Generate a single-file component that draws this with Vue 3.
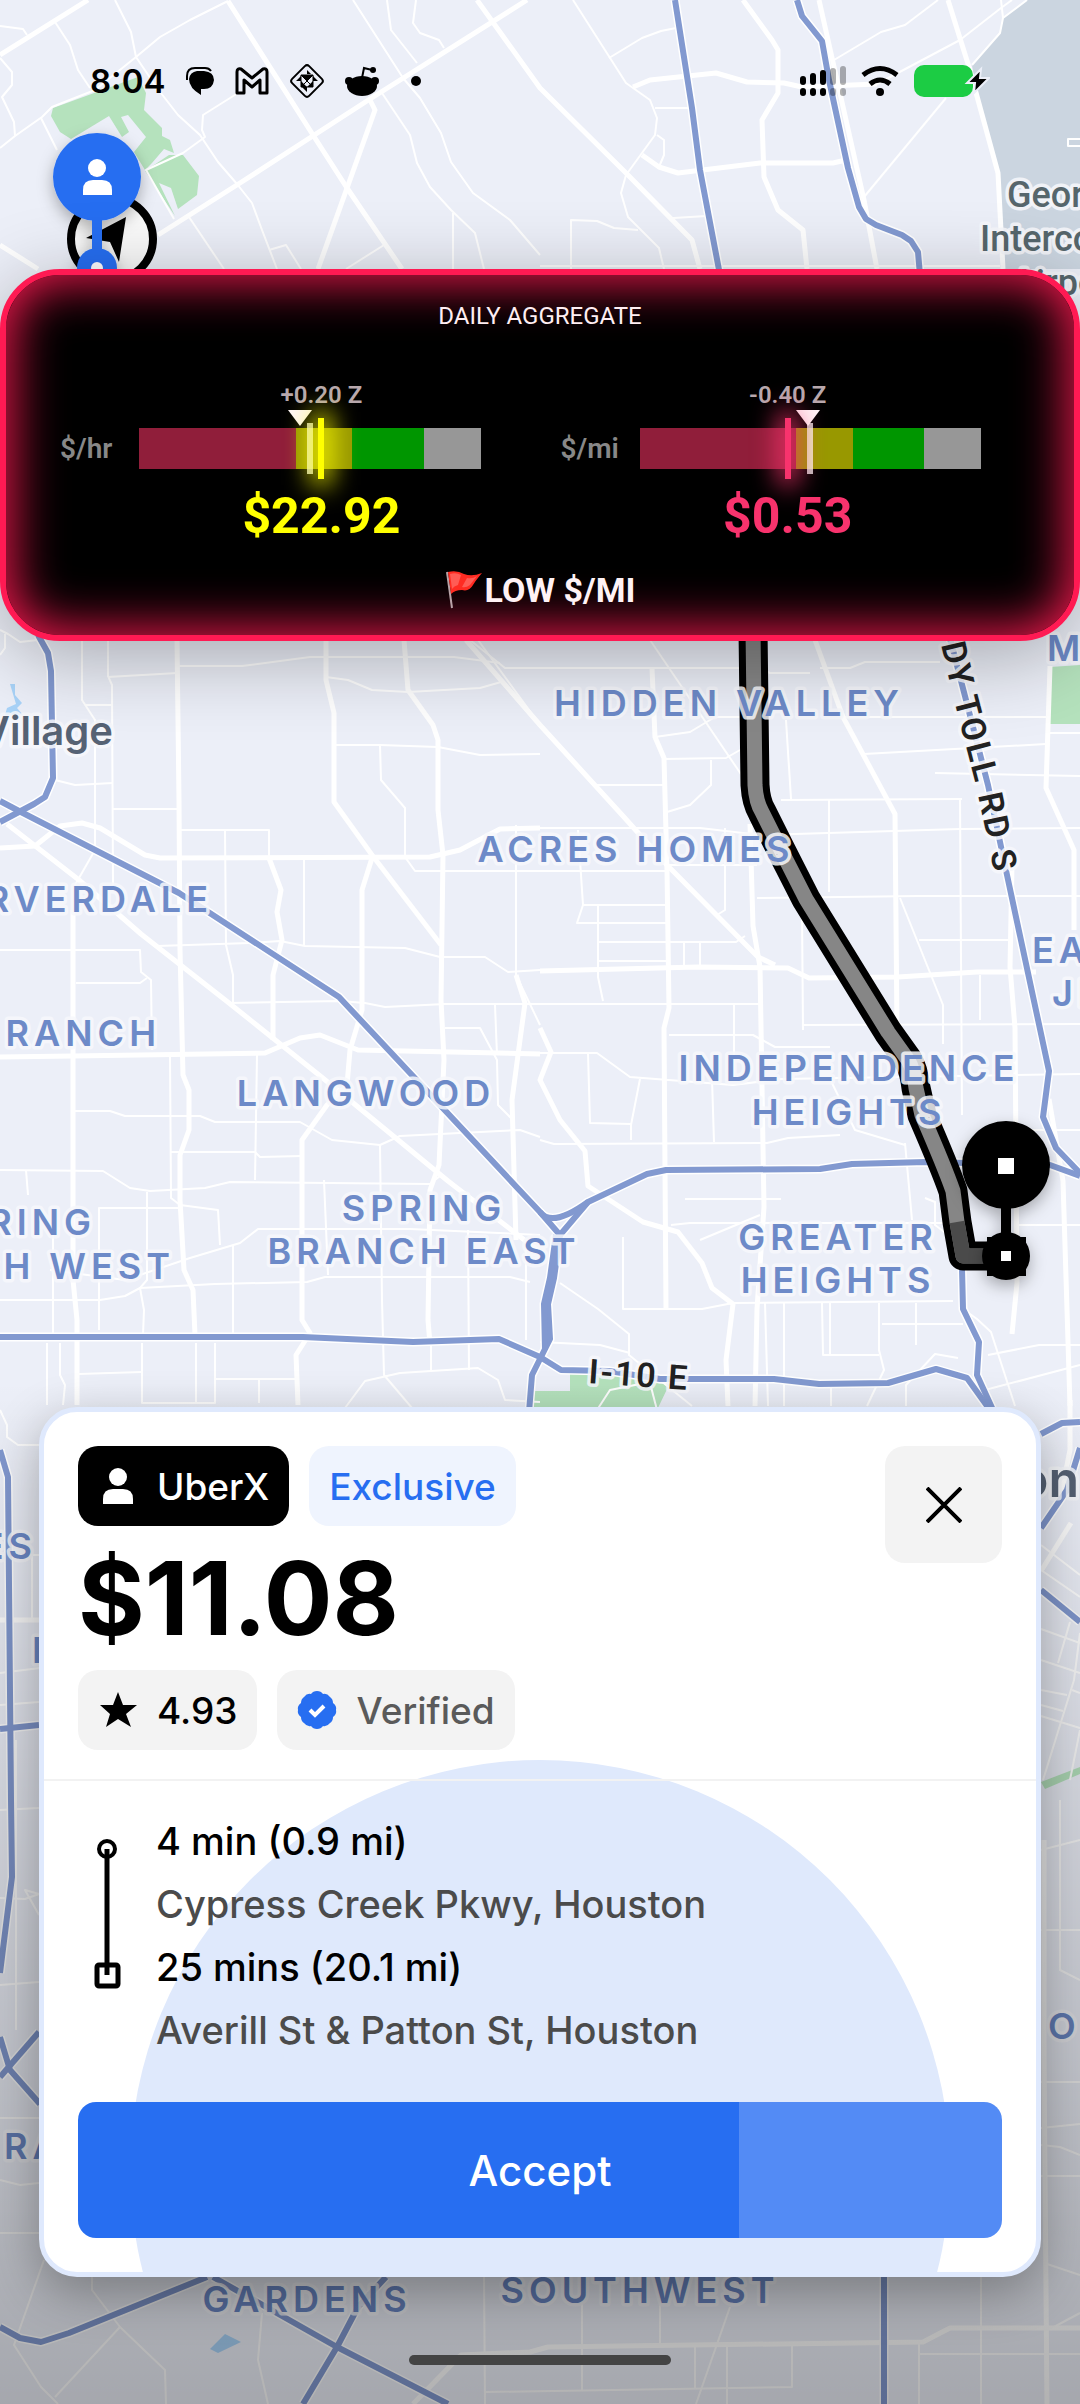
<template>
  <main class="screen">
    <svg class="map" viewBox="0 0 1080 2404" preserveAspectRatio="xMidYMin slice" aria-label="Map of Houston">
      <defs>
        <linearGradient id="dim" x1="0" y1="0" x2="0" y2="1">
          <stop offset="0" stop-color="#000" stop-opacity="0" />
          <stop offset="0.4" stop-color="#000" stop-opacity="0.12" />
          <stop offset="1" stop-color="#000" stop-opacity="0.3" />
        </linearGradient>
        <filter id="pinShadow" x="-50%" y="-50%" width="200%" height="200%">
          <feDropShadow dx="0" dy="6" stdDeviation="8" flood-color="#000" flood-opacity="0.3" />
        </filter>
        <path id="tollRoad" d="M928 590 L954 700 L976 785 L998 890" />
      </defs>
      <rect width="1080" height="2404" fill="#eceff8" />
      <path v-for="d in water" :key="d" :d="d" fill="#cbd5e0" />
      <path v-for="d in parks" :key="d" :d="d" fill="#b5e2bd" />
      <path v-for="d in ponds" :key="d" :d="d" fill="#a9d3f8" />
      <path v-for="d in minorRoads" :key="d" :d="d" class="road" stroke-width="2" />
      <path v-for="d in majorRoads" :key="d" :d="d" class="road" stroke-width="5" />
      <path v-for="d in highways" :key="d" :d="d" class="road" stroke-width="9" />
      <path v-for="d in highways" :key="d + 'b'" :d="d" class="highway" />

      <path :d="route" class="route" stroke="#000" stroke-width="29" />
      <path :d="route" class="route" stroke="#868686" stroke-width="15" />
      <path d="M957 1222 L963 1256 H998" class="route" stroke="#4a4a4a" stroke-width="15" />

      <g class="area">
        <text v-for="l in areas" :key="l.text + l.y" :x="l.x" :y="l.y" :text-anchor="l.anchor || 'middle'">{{ l.text }}</text>
      </g>
      <g class="airport">
        <text x="1007" y="207">George Bush</text>
        <text x="980" y="251">Intercontinental</text>
        <text x="1012" y="295">Airport</text>
      </g>
      <text class="town" x="113" y="745" font-size="40" text-anchor="end">Village</text>
      <text class="town" x="1079" y="1497" font-size="50" text-anchor="end">Houston</text>
      <text class="street"><textPath href="#tollRoad" startOffset="56">DY TOLL RD S</textPath></text>
      <text class="street wide" x="588" y="1383" transform="rotate(4 588 1383)">I-10 E</text>

      <circle cx="112" cy="239" r="41" fill="#fafafa" stroke="#000" stroke-width="8" />
      <path d="M126 217 L119 262 L110 242 L86 238 Z" fill="#000" />
      <g filter="url(#pinShadow)">
        <path d="M97 176 V268" stroke="#276ef1" stroke-width="10" />
        <circle cx="97" cy="177" r="44" fill="#276ef1" />
        <circle cx="97" cy="268" r="20" fill="#276ef1" />
      </g>
      <circle cx="97" cy="268" r="6" fill="#fff" />
      <circle cx="97" cy="168" r="9" fill="#fff" />
      <path d="M83 195 V190 Q83 180 93 180 H102 Q112 180 112 190 V195 Z" fill="#fff" />
      <g filter="url(#pinShadow)">
        <path d="M1006 1165 V1256" stroke="#000" stroke-width="10" />
        <circle cx="1006" cy="1165" r="44" />
        <circle cx="1006" cy="1256" r="24" />
        <rect x="987" y="1237" width="39" height="39" />
      </g>
      <rect x="998" y="1158" width="16" height="16" fill="#fff" />
      <rect x="1001" y="1251" width="10" height="10" fill="#fff" />
      <rect y="1380" width="1080" height="1024" fill="url(#dim)" />
    </svg>

    <header class="status">
      <div class="status-side">
        <time>8:04</time>
        <svg width="30" height="30" viewBox="0 0 30 30">
          <path d="M2 14 V10 Q2 2 10 2 H20 Q24 2 26 5" fill="none" stroke="#000" stroke-width="2" />
          <path d="M12 5 H19 Q29 6 29 14 Q28 23 19 23 H16 V29 Q4 22 4 13 Q5 6 12 5 Z" />
        </svg>
        <svg width="34" height="30" viewBox="0 0 34 30">
          <path d="M2 6 Q2 2 6 3 L17 12 L28 3 Q32 2 32 6 V27 H25 V14 L17 21 L9 14 V27 H2 Z" fill="none" stroke="#000" stroke-width="3" stroke-linejoin="round" />
        </svg>
        <svg width="36" height="36" viewBox="0 0 36 36">
          <rect x="6" y="6" width="24" height="24" rx="3" transform="rotate(45 18 18)" fill="none" stroke="#000" stroke-width="2" />
          <path d="M18 7 L22 11 H18 Z M12 12 H18 V18 Z M18 12 H24 L18 18 Z M24 13 L29 18 H24 Z M12 18 H7 L12 13 Z M12 18 L18 24 H12 Z M24 18 V24 H18 Z M18 24 V29 L13 24 Z" />
          <path d="M12 12 H24 V24 H12 Z M12 12 L24 24 M24 12 L12 24" fill="none" stroke="#000" stroke-width="1" />
        </svg>
        <svg width="34" height="36" viewBox="0 0 34 36">
          <path d="M17 15 L19 5 L27 7" fill="none" stroke="#000" stroke-width="2" />
          <circle cx="28" cy="7" r="3" />
          <circle cx="4" cy="18" r="4" />
          <circle cx="30" cy="18" r="4" />
          <ellipse cx="17" cy="23" rx="15" ry="10" />
        </svg>
        <span class="dot"></span>
      </div>
      <div class="status-side right">
        <svg width="46" height="32" viewBox="0 0 46 32">
          <g v-for="(h, i) in [9, 12, 15, 17, 19]" :key="i" :opacity="i > 2 ? 0.3 : 1">
            <rect :x="i * 10" :y="20 - h" width="6" :height="h" rx="3" />
            <rect :x="i * 10" y="23" width="6" height="8" rx="3" />
          </g>
        </svg>
        <svg width="38" height="32" viewBox="0 0 38 32">
          <path d="M2 10 Q19 -3 36 10 M9 19 Q19 11 29 19" fill="none" stroke="#000" stroke-width="5" />
          <circle cx="19" cy="27" r="4" />
        </svg>
        <svg width="76" height="34" viewBox="0 0 76 34">
          <rect y="1" width="59" height="32" rx="10" fill="#1ccc44" />
          <path d="M67 5 L53 19 H61 L60 29 L75 14 H66 Z" stroke="#eceff8" stroke-width="2" />
        </svg>
      </div>
    </header>

    <section class="banner">
      <h1>DAILY AGGREGATE</h1>
      <div class="gauges">
        <div v-for="g in gauges" :key="g.unit" class="gauge">
          <div class="reading z" :style="{ width: g.now * 2 + '%' }">{{ g.z }}</div>
          <div class="unit">{{ g.unit }}</div>
          <div class="track">
            <span class="low"></span>
            <span class="mid"></span>
            <span class="good"></span>
            <span class="top"></span>
            <i class="arrow" :style="{ left: g.target + '%' }"></i>
            <i class="mean" :style="{ left: g.mean + '%' }"></i>
            <i class="now" :style="{ left: g.now + '%', color: g.color }"></i>
          </div>
          <div class="reading value" :style="{ width: g.now * 2 + '%', color: g.color }">{{ g.value }}</div>
        </div>
      </div>
      <p class="flag">
        <svg width="38" height="40" viewBox="0 0 38 40">
          <path d="M2 2 L7 38" stroke="#b9a3a8" stroke-width="2" />
          <path d="M3 2 Q12 0 19 4 Q27 7 37 3 Q31 10 28 15 Q24 22 17 20 Q10 20 6 24 Z" fill="#ff2b22" />
          <path d="M5 4 Q11 2 16 5 L13 15 Q9 16 7 19 Z M22 8 Q28 9 32 6 L25 15 Q21 18 17 17 Z" fill="#ff5c55" />
        </svg>
        <span>LOW $/MI</span>
      </p>
    </section>

    <article class="card">
      <div class="head">
        <div class="summary">
          <div class="chips">
            <span class="chip dark">
              <svg width="40" height="40" viewBox="0 0 40 40">
                <circle cx="20" cy="11" r="9" />
                <path d="M5 38 V33 Q5 23 15 23 H25 Q35 23 35 33 V38 Z" />
              </svg>
              UberX
            </span>
            <span class="chip blue">Exclusive</span>
          </div>
          <p class="price">$11.08</p>
          <div class="chips">
            <span class="chip">
              <svg width="40" height="40" viewBox="0 0 40 40">
                <path d="M20 2 L25 15 L39 15 L28 24 L33 37 L20 29 L8 37 L12 24 L2 15 L15 15 Z" />
              </svg>
              4.93
            </span>
            <span class="chip muted">
              <svg width="40" height="40" viewBox="0 0 40 40">
                <path d="M20 1 Q24 1 26 4 Q30 3 33 7 Q36 9 36 13 Q40 16 39 20 Q40 24 36 27 Q36 31 33 33 Q30 37 26 36 Q24 39 20 39 Q16 39 14 36 Q10 37 7 33 Q4 31 4 27 Q0 24 1 20 Q0 16 4 13 Q4 9 7 7 Q10 3 14 4 Q16 1 20 1 Z" fill="#276ef1" />
                <path d="M13 20 L18 25 L27 16" fill="none" stroke="#fff" stroke-width="4" />
              </svg>
              Verified
            </span>
          </div>
        </div>
        <button class="close" type="button" aria-label="Dismiss">
          <svg width="36" height="36" viewBox="0 0 36 36">
            <path d="M1 1 L35 35 M35 1 L1 35" stroke="#000" stroke-width="4" />
          </svg>
        </button>
      </div>
      <div class="trip">
        <svg class="stops" width="26" height="144" viewBox="0 0 26 144">
          <circle cx="13" cy="10" r="8" fill="none" stroke="#000" stroke-width="4" />
          <path d="M13 10 V136" stroke="#000" stroke-width="5" />
          <rect x="3" y="126" width="21" height="21" rx="2" fill="none" stroke="#000" stroke-width="5" />
        </svg>
        <div class="legs">
          <template v-for="leg in legs" :key="leg.place">
            <p>{{ leg.time }}</p>
            <p class="place">{{ leg.place }}</p>
          </template>
        </div>
      </div>
      <button class="accept" type="button" @click="accepted = true">Accept</button>
    </article>

    <div class="home"></div>
  </main>
</template>

<script setup>
import { ref } from 'vue'

const accepted = ref(false)

const gauges = [
  { unit: '$/hr', z: '+0.20 Z', value: '$22.92', now: 53.4, mean: 50, target: 47, color: '#ffff00' },
  { unit: '$/mi', z: '-0.40 Z', value: '$0.53', now: 43.4, mean: 50, target: 49.3, color: '#f8336d' }
]

const legs = [
  { time: '4 min (0.9 mi)', place: 'Cypress Creek Pkwy, Houston' },
  { time: '25 mins (20.1 mi)', place: 'Averill St & Patton St, Houston' }
]

const areas = [
  { text: 'HIDDEN VALLEY', x: 729, y: 716 },
  { text: 'ACRES HOMES', x: 636, y: 862 },
  { text: 'RVERDALE', x: 213, y: 912, anchor: 'end' },
  { text: 'RANCH', x: 161, y: 1046, anchor: 'end' },
  { text: 'LANGWOOD', x: 366, y: 1106 },
  { text: 'SPRING', x: 424, y: 1221 },
  { text: 'BRANCH EAST', x: 424, y: 1264 },
  { text: 'SPRING', x: 96, y: 1235, anchor: 'end' },
  { text: 'BRANCH WEST', x: 175, y: 1279, anchor: 'end' },
  { text: 'INDEPENDENCE', x: 849, y: 1081 },
  { text: 'HEIGHTS', x: 849, y: 1125 },
  { text: 'GREATER', x: 838, y: 1250 },
  { text: 'HEIGHTS', x: 838, y: 1293 },
  { text: 'EAST', x: 1032, y: 963, anchor: 'start' },
  { text: 'JENSEN', x: 1052, y: 1006, anchor: 'start' },
  { text: 'M', x: 1047, y: 661, anchor: 'start' },
  { text: 'ES', x: 37, y: 1559, anchor: 'end' },
  { text: 'E', x: 32, y: 1663, anchor: 'start' },
  { text: 'O', x: 1048, y: 2039, anchor: 'start' },
  { text: 'RA', x: 4, y: 2159, anchor: 'start' },
  { text: 'GARDENS', x: 307, y: 2312 },
  { text: 'SOUTHWEST', x: 640, y: 2303 }
]

const route = 'M753 630 L755 785 Q756 802 762 812 L778 844 L806 899 L888 1032 L908 1060 Q914 1070 916 1088 L922 1115 Q945 1168 953 1191 L957 1222 L963 1256 H998'

const water = ['M1027 0 L1003 18 L1000 33 L972 65 L979 107 L998 173 L1001 269 H1080 V0 Z']

const parks = [
  'M53 108 L138 77 L146 93 L144 110 L162 128 V136 L170 140 L174 153 L164 149 L152 163 L145 170 L134 152 L146 137 L128 115 L121 117 L129 132 L122 137 L109 116 L71 139 L60 132 L51 116 Z',
  'M145 171 L169 155 H183 L199 176 L197 195 L178 209 L171 188 L159 183 L175 216 Z',
  'M1050 667 L1080 665 V724 H1050 Z',
  'M530 1410 L534 1391 H570 V1374 L612 1375 L669 1385 L657 1410 Z',
  'M1041 1782 L1080 1767 V1774 L1045 1789 Z'
]

const ponds = [
  'M10 684 H15 V695 L22 703 L17 708 L23 715 H5 L7 708 L16 704 Z',
  'M225 2334 L241 2342 L218 2353 L210 2349 Z'
]

const highways = [
  'M675 0 L692 108 L700 170 L720 275',
  'M797 0 L802 16 L822 41 L829 80 L848 168 L859 207 L866 219 L876 225 L902 235 L911 241 L918 252 L920 275',
  'M940 600 L966 700 L988 785 L1007 875 L1049 1071 L1043 1117 L1056 1148 L1080 1173',
  'M0 801 L19 811 L179 893 L339 997 L540 1212 L560 1235',
  'M560 1235 L588 1202 L647 1174 L666 1170 L820 1169 L852 1164 L926 1162 L1050 1165 L1080 1176',
  'M560 1235 L554 1278 L548 1304 L550 1339 L532 1375 L529 1412',
  'M556 1235 L550 1278 L544 1304 L545 1350',
  'M540 1212 Q552 1228 588 1202',
  'M0 1337 L303 1337 L413 1342 L499 1339 L540 1357 L561 1370 L609 1371 L660 1379 L774 1379 L819 1384 L888 1383 L936 1369 L967 1378 L990 1410',
  'M962 1268 L963 1309 L979 1342 L977 1375 L993 1410',
  'M38 635 L48 653 L51 671 L53 778 L45 797 L34 804 L0 822',
  'M0 1450 L8 1477 L11 1800 L12 1877 L0 1973',
  'M0 1729 L39 1725',
  'M0 2077 L39 2032',
  'M0 2037 L10 2070 L40 2104',
  'M0 2327 L20 2338 L41 2342 L69 2333 L207 2277',
  'M213 2277 L337 2347 L448 2404',
  'M303 2404 L337 2347 L358 2307 L386 2277',
  'M884 2270 V2404',
  'M1041 1434 L1062 1423 L1080 1422',
  'M1080 1448 L1067 1490 L1041 1528',
  'M1041 1590 L1080 1622'
]

const majorRoads = [
  'M0 55 L88 0',
  'M158 235 L240 183 L370 99 L527 0',
  'M228 1 L313 135 L347 188 L402 269',
  'M477 0 L540 88 L625 172 L692 240 L700 269',
  'M0 245 L38 269',
  'M370 100 L375 110 L318 269',
  'M819 0 L864 200 L877 269',
  'M948 0 L969 67 L998 173 L1003 269',
  'M743 0 L772 40 L778 50 V93 L762 120 L764 177 L778 210 L803 230 L807 269',
  'M633 87 L650 80 L716 73 L747 82 L784 83 L802 87 L877 84',
  'M642 155 L659 167 L678 173 L760 163 L833 163 L846 160',
  'M177 640 L179 800 L180 950 L183 1075 L189 1090 V1130 L180 1155 V1200 L184 1270 L193 1290 L195 1335',
  'M326 640 V680 L334 713 V802 L372 855 L441 945',
  'M404 640 L408 690 L433 725 L438 740 V810 L443 855 L441 1000 L444 1060 L439 1165 L430 1190 L428 1320 L430 1344',
  'M372 858 L362 890 V1010 L350 1050 L347 1085 L327 1105 L302 1140 V1320 L310 1333 L296 1355 L298 1405',
  'M7 824 L79 880 L141 934 L229 1003 L324 1079 L448 1181 L540 1252',
  'M73 910 V1280 L77 1320 V1405',
  'M269 858 L281 890 L277 912 L282 940 L273 975 V1040',
  'M0 1057 L73 1056 L265 1053 L300 1038 L320 1035 L358 1050 L540 1054',
  'M0 848 L35 846 L60 826 L82 823 L100 828 L145 855 L160 858 L430 857 L460 850 L500 829 L540 828',
  'M516 975 L525 1003 L520 1040 L512 1100 L516 1240',
  'M466 640 L540 725 L623 816 L667 865 L758 957 L775 965',
  'M815 640 L843 717 L895 814 L897 1030',
  'M652 668 L655 737 L664 758 L667 870 L669 1008 L664 1028 L666 1309',
  'M750 824 L753 926 L760 967 L764 1207 L757 1309 L755 1406',
  'M540 971 L698 967 L788 968 L809 978 L898 977 L977 972 L1036 972',
  'M540 1028 L551 1052 L540 1080 L560 1120 L585 1151 L588 1186 L643 1222 L678 1232 L702 1263 L712 1288 L733 1304 L726 1360 L728 1406',
  'M1050 666 L1046 788 L1074 850 V930',
  'M1049 1099 L1063 1181 L1070 1406',
  'M1012 865 L1010 967 L1015 1028 L1017 1283 L1012 1334',
  'M413 2404 L461 2355 L530 2352 L548 2347 L923 2342 L950 2328 H1080',
  'M1044 1840 V2060 L1047 2404',
  'M0 1620 H40', 'M1070 1400 V1450 L1060 1500', 'M1071 1523 L1041 1571'
]

const minorRoads = [
  'M0 26 L23 29 L27 35',
  'M55 22 L70 45 L78 70 L90 88',
  'M115 0 L131 32 L136 57 L157 88 L178 115 L200 135 L218 162 L237 184 L252 203 L262 230 L277 269',
  'M0 148 L15 136 L42 117 L52 107 L95 90 L136 57 L160 37 L190 20 L228 1',
  'M353 0 L403 78 L420 98 L441 133 L451 162 L473 193 L510 220 L540 255',
  'M382 93 L410 135 L417 163 L430 187 L451 210 L475 233 L484 269',
  'M416 0 L413 23 L420 33 L439 40 L444 48',
  'M387 0 L391 30 L417 63',
  'M238 93 L203 115 L202 130 L205 137 L183 153 L146 170 L174 219',
  'M0 58 L12 72 V85 L2 97 L14 122 L15 136',
  'M41 118 L57 150', 'M189 217 L224 269', 'M384 245 L346 269', 'M269 250 L286 245 L301 269', 'M453 213 V269',
  'M573 0 L626 83 L650 100 L657 118 L655 135 L626 175 L621 193 L628 217 L659 248 L664 269',
  'M609 58 L642 38 L661 31 L676 28',
  'M877 84 L960 40 L1001 8 L1012 0',
  'M1027 0 L1003 18 L1000 33 L972 65', 'M1001 0 L1003 18',
  'M834 60 L881 32 L905 25 L938 0',
  'M657 135 L664 140 V155 L659 167',
  'M946 98 L864 197', 'M655 108 H688', 'M673 218 L707 216',
  'M571 269 V220 L597 221 L614 228 L638 230',
  'M540 266 H1000', 'M1080 139 H1068 V146 H1080',
  'M0 630 L8 634 L20 642 L38 640', 'M0 655 L5 648 V634',
  'M82 640 V700 L95 720 V850 L75 885',
  'M108 640 V676 L112 685 L113 885',
  'M108 677 L177 673', 'M179 666 L242 666 L310 657 L454 657 L500 663',
  'M326 677 L348 680 L372 690 L408 692 L480 688 L501 682',
  'M470 640 L505 668 H740', 'M478 640 L540 725',
  'M334 745 H380 L438 747 L480 755 L540 754',
  'M380 745 L381 780 L405 808 V857',
  'M113 809 H178', 'M55 780 L75 785 L113 783', 'M85 705 H112',
  'M180 830 H269 V862', 'M225 831 L226 945 L233 975 V1003', 'M304 858 V946',
  'M157 946 L250 943 L280 941 L305 946 L405 948 L440 957 H485 L508 972 L540 970',
  'M405 857 L415 871 H540',
  'M0 950 H140 L141 972 L151 980 L152 1050', 'M76 983 H140 L147 978',
  'M229 1003 L340 1001 L365 1003 L385 1007 L445 1004 H760',
  'M170 1055 L171 1198 L180 1205',
  'M73 1111 H110 L125 1116 H200 L215 1122 H300 L332 1140 L380 1145 L400 1136 L520 1130 L540 1137',
  'M257 1055 L255 1180', 'M171 1152 H255 L260 1157 L302 1156',
  'M0 1170 L103 1171 L130 1188 L150 1191 L205 1188 L230 1182 L430 1184 L440 1176',
  'M26 1170 L28 1195', 'M147 1192 V1280 L140 1288 L144 1310 L143 1335',
  'M180 1205 L218 1210 L220 1245', 'M99 1330 V1208 H178',
  'M50 1270 L125 1280 L190 1258 L240 1243 L258 1229 H410 L540 1235',
  'M0 1300 H100 L125 1296 L140 1288 L215 1284 L307 1282 L325 1277 H510 L530 1282',
  'M53 1235 V1335', 'M233 1245 V1335', 'M324 1180 L328 1275', 'M468 1230 L469 1370', 'M526 1250 V1340',
  'M380 1145 L382 1300 L384 1375 L412 1408',
  'M445 1028 H480 L497 1060 L498 1105 L513 1120', 'M495 1005 L497 1055', 'M516 825 V975 L540 1025',
  'M345 1408 L365 1381 L400 1373 L478 1368 L498 1380 L505 1400 L540 1402',
  'M47 1343 V1405', 'M60 1343 V1375 L65 1385 L63 1405', 'M78 1374 L142 1372',
  'M142 1343 V1403 H215 V1343', 'M196 1343 V1403', 'M215 1379 H296', 'M259 1380 V1403', 'M431 1345 V1372',
  'M650 640 L747 783', 'M664 759 L726 758 L740 750', 'M655 737 L690 732 L715 717 H760',
  'M595 785 H664', 'M667 812 L690 805 L711 785 V760',
  'M540 828 H625 L700 828 L760 835 L960 829 L1080 828',
  'M781 800 L962 799', 'M757 898 L919 896 L1080 896', 'M540 871 H667',
  'M578 830 L583 905 H667', 'M583 905 L577 923 H667', 'M598 905 V977 L603 1001', 'M598 942 H736 L745 936',
  'M598 961 H667', 'M684 942 V968', 'M700 942 V968', 'M667 865 H757', 'M725 828 V910 L717 915',
  'M960 799 L962 1115', 'M829 799 V892', 'M802 911 L803 1030', 'M919 940 H1010',
  'M900 898 L943 1005 V1044', 'M980 975 V1020', 'M803 1025 L1080 1024',
  'M843 717 H1048', 'M864 754 L1046 744', 'M935 773 L1080 776', 'M786 720 L791 799', 'M745 663 L770 673 H810',
  'M820 668 L850 668 L865 662 H940', 'M1050 733 H1080',
  'M540 1053 H597 L630 1077 L733 1085 L781 1079 L1080 1074',
  'M540 1140 L554 1144 L767 1143 L788 1138 L840 1135', 'M640 1079 L631 1125 V1140', 'M712 1079 L714 1142', 'M588 1053 L590 1123 L631 1124',
  'M671 1225 L690 1223 H953', 'M685 1199 H781', 'M734 1004 V1079', 'M669 1035 H753 L775 1047 H830',
  'M830 1079 L855 1130 L905 1145', 'M905 1143 L912 1220', 'M925 1198 L935 1202 V1225 L955 1240',
  'M623 1237 V1309 H702 L733 1303 L953 1301', 'M700 1240 L760 1215',
  'M822 1303 L823 1355 H879', 'M830 1303 V1355', 'M879 1303 V1350 L884 1370 L867 1406',
  'M916 1303 V1345', 'M882 1324 H963', 'M560 1283 L598 1309 L629 1334 V1355 L692 1406',
  'M540 1342 L600 1345 L630 1353', 'M963 1309 L977 1319 L991 1332 L1015 1406',
  'M988 1355 L1039 1345 H1080', 'M784 1303 V1406', 'M831 1384 V1406', 'M765 1303 L768 1406',
  'M906 1406 V1385 L935 1354 L958 1358', 'M985 1390 L1080 1365', 'M1017 1130 H1080', 'M1017 1225 H1080',
  'M597 1410 L610 1390 L650 1382', 'M650 1383 L657 1410',
  'M0 1410 L7 1425 V1437 L18 1445 H40', 'M32 1555 V1618', 'M0 1555 H40', 'M0 1673 L40 1668', 'M0 1705 L39 1702', 'M16 1740 V2030',
  'M0 1810 L39 1808', 'M0 1898 L25 1899 L39 1894 L25 1890 L39 1915', 'M0 1985 L39 1982', 'M0 2118 H39', 'M0 2180 L20 2185 L39 2183',
  'M0 2233 H39',
  'M92 2277 V2290 L120 2327 L165 2370 L166 2404', 'M44 2260 L14 2345 L41 2387 L58 2404', 'M120 2327 L55 2397',
  'M262 2313 L258 2360 L268 2404', 'M484 2277 L485 2404', 'M582 2303 V2390', 'M660 2303 V2345', 'M730 2307 L696 2404',
  'M485 2392 L792 2387 V2345', 'M695 2346 V2388', 'M727 2346 V2404', 'M919 2343 V2404', 'M919 2354 H1080',
  'M981 2277 V2404', 'M1044 2263 L1080 2275', 'M1080 2313 L1052 2328', 'M1041 2082 H1080', 'M1041 2128 L1080 2124', 'M1041 2145 L1060 2147 L1080 2155', 'M1041 2176 H1080',
  'M1041 1545 L1080 1575', 'M1041 1570 L1080 1597', 'M1041 1629 L1080 1643', 'M1070 1622 L1058 1663', 'M1041 1660 L1080 1673',
  'M1080 1633 L1074 1680 L1043 1780', 'M1041 1690 L1067 1695', 'M1041 1705 L1063 1711', 'M1041 1716 L1080 1728', 'M1072 1690 L1080 1693', 'M1070 1780 L1080 1730',
  'M1041 1850 L1080 1840', 'M1041 1930 H1080', 'M1060 1800 V1970 L1080 1980'
]
</script>

<style>
body {
  background: #a6a7ab;
}
</style>

<style scoped>
.screen {
  position: relative;
  min-height: 100vh;
  display: flex;
  flex-direction: column;
  overflow: hidden;
  font-family: Inter, "Liberation Sans", sans-serif;
  color: #000;
}

p,
h1 {
  margin: 0;
}

.map {
  position: absolute;
  top: 0;
  left: 0;
  width: 100%;
  height: 100%;
}

.road {
  fill: none;
  stroke: #fff;
  stroke-linejoin: round;
}

.highway {
  fill: none;
  stroke: #8299d0;
  stroke-width: 6;
  stroke-linejoin: round;
}

.route {
  fill: none;
  stroke-linejoin: round;
}

.map text {
  paint-order: stroke;
  stroke: rgba(247, 248, 252, 0.85);
  stroke-width: 7px;
  stroke-linejoin: round;
}

.area {
  font-size: 36px;
  font-weight: 600;
  letter-spacing: 5px;
  fill: #6d8ac8;
}

.airport {
  font-family: Roboto, sans-serif;
  font-size: 36px;
  font-weight: 500;
  fill: #56666c;
}

.town {
  font-weight: 600;
  fill: #566274;
}

.street {
  font-family: Roboto, sans-serif;
  font-size: 34px;
  font-weight: 600;
  letter-spacing: 2px;
  fill: #222;
}

.status {
  position: relative;
  display: flex;
  justify-content: space-between;
  padding: 60px 90px;
  height: 42px;
}

.status-side {
  display: flex;
  align-items: center;
  gap: 20px;
}

.status-side.right {
  gap: 15px;
}

time {
  font-size: 33px;
  font-weight: 600;
}

.dot {
  width: 10px;
  height: 10px;
  margin-left: 12px;
  border-radius: 50%;
  background: #000;
}

.banner {
  position: relative;
  margin-top: 107px;
  padding: 27px 93px 25px 54px;
  border: 6px solid #ff1a53;
  border-radius: 60px;
  background: #000;
  box-shadow: inset 0 0 50px 6px rgba(255, 26, 83, 0.95), 0 16px 80px rgba(0, 0, 0, 0.3);
  font-family: Roboto, sans-serif;
}

h1,
.flag {
  margin-right: -39px;
  text-align: center;
}

h1 {
  font-size: 24px;
  font-weight: 400;
  line-height: 28px;
  color: #ffeef2;
}

.gauges {
  display: grid;
  grid-template-columns: 1fr 1fr;
  gap: 80px;
  margin-top: 51px;
}

.gauge {
  display: grid;
  grid-template-columns: 79px minmax(0, 1fr);
  align-items: center;
}

.reading {
  grid-column: 2;
  display: flex;
  justify-content: center;
}

.z {
  font-size: 24px;
  font-weight: 600;
  line-height: 28px;
  color: #b8a8ad;
}

.unit {
  font-size: 28px;
  font-weight: 600;
  color: #888;
}

.track {
  position: relative;
  display: grid;
  grid-template-columns: 11fr 4fr 5fr 4fr;
  height: 41px;
  margin: 19px 0;
}

.low {
  background: #901e3a;
}

.mid {
  background: #989800;
}

.good {
  background: #009600;
}

.top {
  background: #979797;
}

.track i {
  position: absolute;
  transform: translateX(-50%);
}

.arrow {
  top: -18px;
  border: 12px solid transparent;
  border-top: 16px solid #fff6f8;
  border-bottom: 0;
}

.mean {
  top: -5px;
  bottom: -5px;
  width: 6px;
  background: rgba(255, 255, 255, 0.75);
}

.now {
  top: -10px;
  bottom: -10px;
  width: 6px;
  background: currentColor;
  box-shadow: 0 0 26px 6px currentColor;
}

.value {
  font-size: 50px;
  font-weight: 700;
  line-height: 56px;
}

.flag {
  display: flex;
  justify-content: center;
  align-items: center;
  gap: 2px;
  margin-top: 26px;
  font-size: 34px;
  font-weight: 700;
  line-height: 40px;
  color: #fff2f5;
}

.card {
  position: relative;
  margin: auto 39px 0;
  padding: 34px 0;
  border: 5px solid #dfe9fd;
  border-radius: 38px;
  background: #fff;
  overflow: hidden;
  box-shadow: 0 16px 50px rgba(0, 0, 0, 0.3);
}

.card::before {
  content: "";
  position: absolute;
  left: 50%;
  bottom: -308px;
  width: 820px;
  height: 820px;
  margin-left: -410px;
  border-radius: 50%;
  background: #dfe9fc;
}

.head {
  position: relative;
  display: flex;
  justify-content: space-between;
  align-items: flex-start;
  padding: 0 34px 29px;
  border-bottom: 2px solid #f2f2f2;
}

.chips {
  display: flex;
  gap: 20px;
}

.chip {
  display: flex;
  align-items: center;
  gap: 19px;
  height: 80px;
  padding: 0 20px;
  border-radius: 20px;
  background: #f3f3f3;
  font-size: 37px;
  font-weight: 500;
}

.chip.dark {
  background: #000;
  color: #fff;
  fill: #fff;
}

.chip.blue {
  background: #eff4fe;
  color: #276ef1;
}

.chip.muted {
  color: #5a5a5a;
}

.price {
  font-size: 102px;
  font-weight: 700;
  line-height: 144px;
}

.close {
  display: flex;
  align-items: center;
  justify-content: center;
  width: 117px;
  height: 117px;
  padding: 0;
  border: 0;
  border-radius: 20px;
  background: #f3f3f3;
}

.trip {
  position: relative;
  display: flex;
  gap: 36px;
  padding: 29px 34px 40px 50px;
}

.stops {
  margin-top: 29px;
  overflow: visible;
}

.legs {
  font-size: 38px;
  font-weight: 500;
  line-height: 63px;
}

.place {
  color: #4b4b4b;
}

.accept {
  position: relative;
  display: block;
  width: calc(100% - 68px);
  height: 136px;
  margin: 0 34px;
  border: 0;
  border-radius: 18px;
  background: linear-gradient(to right, #276ef1 71.5%, #538bf5 71.5%);
  color: #fff;
  font-family: inherit;
  font-size: 42px;
  font-weight: 500;
}

.home {
  position: relative;
  align-self: center;
  width: 262px;
  height: 10px;
  margin: 78px 0 39px;
  border-radius: 5px;
  background: #444;
}
</style>
